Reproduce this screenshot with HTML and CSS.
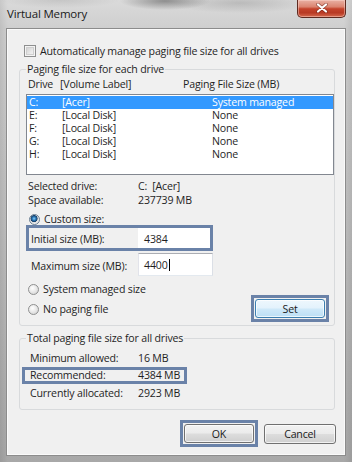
FILE: index.html
```html
<!DOCTYPE html>
<html>
<head>
<meta charset="utf-8">
<link rel="stylesheet" href="styles.css">
</head>
<body>
<div class="window">
  <div class="titlebar">
    <span class="title">Virtual Memory</span>
    <div class="close">
      <svg width="12" height="10" viewBox="0 0 12 10"><path d="M2 1.5 L10 8.5 M10 1.5 L2 8.5" stroke="#5a1a10" stroke-width="3.6" stroke-linecap="round" opacity="0.55"/><path d="M2 1.5 L10 8.5 M10 1.5 L2 8.5" stroke="#ffffff" stroke-width="2.2" stroke-linecap="round"/></svg>
    </div>
  </div>
  <div class="client">
    <div class="check-row"><span class="checkbox"></span><span>Automatically manage paging file size for all drives</span></div>

    <fieldset class="group g1">
      <legend>Paging file size for each drive</legend>
      <div class="list-header"><span>Drive</span><span>[Volume Label]</span><span>Paging File Size (MB)</span></div>
      <div class="listbox">
        <div class="row sel"><span>C:</span><span>[Acer]</span><span>System managed</span></div>
        <div class="row"><span>E:</span><span>[Local Disk]</span><span>None</span></div>
        <div class="row"><span>F:</span><span>[Local Disk]</span><span>None</span></div>
        <div class="row"><span>G:</span><span>[Local Disk]</span><span>None</span></div>
        <div class="row"><span>H:</span><span>[Local Disk]</span><span>None</span></div>
      </div>
      <div class="info">
        <span>Selected drive:</span><span>C:&nbsp; [Acer]</span>
        <span>Space available:</span><span>237739 MB</span>
      </div>
      <div class="radio-row custom"><span class="radio on"></span><span>Custom size:</span></div>
      <div class="hl size-hl">
        <span class="size-label">Initial size (MB):</span>
        <span class="size-input plain">4384</span>
      </div>
      <div class="size-row">
        <span class="size-label">Maximum size (MB):</span>
        <span class="size-input boxed">4400<span class="caret"></span></span>
      </div>
      <div class="bottom-area">
        <div class="radios">
          <div class="radio-row"><span class="radio"></span><span>System managed size</span></div>
          <div class="radio-row"><span class="radio"></span><span>No paging file</span></div>
        </div>
        <div class="hl btn-hl set-hl"><span class="btn default">Set</span></div>
      </div>
    </fieldset>

    <fieldset class="group g2">
      <legend>Total paging file size for all drives</legend>
      <div class="total-row"><span>Minimum allowed:</span><span>16 MB</span></div>
      <div class="total-row hl rec"><span>Recommended:</span><span>4384 MB</span></div>
      <div class="total-row"><span>Currently allocated:</span><span>2923 MB</span></div>
    </fieldset>

    <div class="buttons">
      <div class="hl btn-hl"><span class="btn">OK</span></div>
      <span class="btn cancel">Cancel</span>
    </div>
  </div>
</div>
</body>
</html>
```

FILE: styles.css
```css
* { box-sizing: border-box; }
html, body { margin: 0; padding: 0; }
body {
  width: 352px;
  height: 462px;
  overflow: hidden;
  font-family: "Open Sans", "Noto Sans", sans-serif;
  font-size: 10.6px;
  letter-spacing: -0.18px;
  color: #1f1f1f;
}

.window {
  width: 352px;
  height: 462px;
  display: flex;
  flex-direction: column;
  background:
    radial-gradient(ellipse 45px 9px at 165px 1px, rgba(80,80,80,0.55), rgba(80,80,80,0)),
    radial-gradient(ellipse 70px 10px at 240px 3px, rgba(130,130,130,0.35), rgba(130,130,130,0)),
    radial-gradient(ellipse 60px 8px at 60px 0px, rgba(150,150,150,0.3), rgba(150,150,150,0)),
    linear-gradient(90deg, rgba(0,0,0,0.08), rgba(0,0,0,0) 8px, rgba(0,0,0,0) 344px, rgba(0,0,0,0.08)),
    linear-gradient(#dadada, #cfcfcf 28px, #b9b9b9 60%, #a8a8a8);
}

.titlebar {
  height: 28px;
  display: flex;
  align-items: flex-start;
  flex-shrink: 0;
}
.title {
  margin: 6px 0 0 7px;
  line-height: 15px;
  font-size: 11.5px;
  color: #1a1a1a;
}
.close {
  margin-left: auto;
  margin-right: 6px;
  width: 49px;
  height: 18px;
  border: 1px solid #5e2a20;
  border-top: none;
  border-radius: 0 0 5px 5px;
  background: linear-gradient(#e9b1a3 0%, #db8470 40%, #c4432b 52%, #b83a24 75%, #d56a4e 100%);
  box-shadow: inset 0 0 0 1px rgba(255,220,210,0.45);
  display: flex;
  align-items: center;
  justify-content: center;
}
.close svg { display: block; margin-top: -1px; }

.client {
  margin-left: 6px;
  width: 340px;
  height: 428px;
  background: #f0f0f0;
  border: 1px solid #8c8c8c;
  box-shadow: inset 0 0 0 1px #fafafa;
  flex-shrink: 0;
}

.check-row {
  display: flex;
  align-items: center;
  gap: 4px;
  height: 12px;
  margin-top: 16px;
  padding-left: 17px;
  line-height: 12px;
}
.checkbox {
  width: 12px;
  height: 12px;
  border: 1px solid #8e8f8f;
  background: linear-gradient(135deg, #c9c9c9, #e9e9e9 60%, #f6f6f6);
  box-shadow: inset 0 0 0 1px #f4f4f4, inset 0 0 0 2px #cfcfcf;
  flex-shrink: 0;
}

.group {
  margin: 5px 0 0 12px;
  width: 316px;
  min-width: 0;
  border: 1px solid #d8dadc;
  border-radius: 3px;
  padding: 2px 0 3px 6px;
}
.group legend {
  padding: 0 1px;
  margin: 0;
  line-height: 14px;
}

.list-header {
  display: grid;
  grid-template-columns: 32px 123px 1fr;
  line-height: 13px;
  height: 13px;
  padding-left: 2px;
}

.listbox {
  margin-top: 3px;
  height: 81px;
  background: #ffffff;
  border: 1px solid #828790;
  padding-top: 1px;
}
.row {
  display: grid;
  grid-template-columns: 33px 150px 1fr;
  height: 13px;
  line-height: 13px;
  padding-left: 2px;
}
.row.sel {
  background: #3399ff;
  color: #ffffff;
}

.info {
  margin-top: 4px;
  display: grid;
  grid-template-columns: 110px auto;
  line-height: 14px;
  padding-left: 2px;
}

.radio-row {
  display: flex;
  align-items: center;
  gap: 4px;
  padding-left: 2px;
}
.radio-row.custom {
  margin-top: 7px;
  height: 11px;
  line-height: 11px;
  padding-left: 3px;
}
.radio {
  width: 11px;
  height: 11px;
  border-radius: 50%;
  border: 1px solid #8f9090;
  background: radial-gradient(circle at 40% 35%, #ffffff 0, #ececec 40%, #cdcdcd 100%);
  flex-shrink: 0;
}
.radio.on {
  border-color: #6a7f93;
  background: radial-gradient(circle at 45% 40%, #8fd0f4 0, #2e7fc0 1.6px, #153f6a 3.2px, #dcdcdc 3.8px, #f6f6f6 5.5px);
}

.hl {
  border: 3px solid #6a82a8;
}
.size-hl {
  width: 187px;
  height: 26px;
  display: grid;
  grid-template-columns: 109px 1fr;
}
.size-label {
  padding-left: 2px;
  align-self: center;
  line-height: 14px;
  padding-top: 1px;
}
.size-input {
  background: #ffffff;
  padding-left: 6px;
  line-height: 14px;
  display: flex;
  align-items: center;
}
.size-input.plain { padding-top: 1px; }

.size-row {
  margin-top: 2px;
  height: 23px;
  display: grid;
  grid-template-columns: 112px 75px;
}
.size-row .size-label { padding-left: 5px; padding-top: 2px; }
.size-input.boxed {
  border: 1px solid;
  border-color: #abadb3 #dbdfe6 #e3e9ef #e2e3ea;
  padding-left: 5px;
}
.caret {
  display: inline-block;
  width: 1px;
  height: 12px;
  background: #000000;
  margin-left: 1px;
}

.bottom-area {
  margin-top: 3px;
  display: flex;
}
.radios .radio-row {
  height: 20px;
  line-height: 14px;
}
.set-hl {
  margin-left: auto;
  margin-right: 5px;
  margin-top: 16px;
}
.btn-hl {
  width: 78px;
  height: 27px;
  padding: 1px;
  display: flex;
}
.btn {
  flex: 1;
  display: flex;
  align-items: center;
  justify-content: center;
  border: 1px solid #707070;
  border-radius: 3px;
  background: linear-gradient(#f2f2f2 0%, #ebebeb 48%, #dddddd 52%, #cfcfcf 100%);
  box-shadow: inset 0 0 0 1px rgba(255,255,255,0.7);
  line-height: 14px;
  color: #1a1a1a;
}
.btn.default {
  border-color: #3c7fb1;
  background: linear-gradient(#eef7fd 0%, #e3f2fc 48%, #cfe9f9 52%, #bcdff5 100%);
}

.g2 {
  margin-top: 5px;
  padding: 6px 0 9px 6px;
}
.total-row {
  display: grid;
  grid-template-columns: 108px auto;
  line-height: 14px;
  height: 14px;
  padding-left: 4px;
}
.total-row.rec {
  margin: 2px 0 2px -4px;
  width: 165px;
  height: 17px;
  line-height: 11px;
  padding-left: 5px;
}

.buttons {
  margin-top: 10px;
  display: flex;
  justify-content: flex-end;
  align-items: center;
  gap: 6px;
  padding-right: 9px;
}
.btn.cancel {
  flex: none;
  width: 72px;
  height: 20px;
}
```
